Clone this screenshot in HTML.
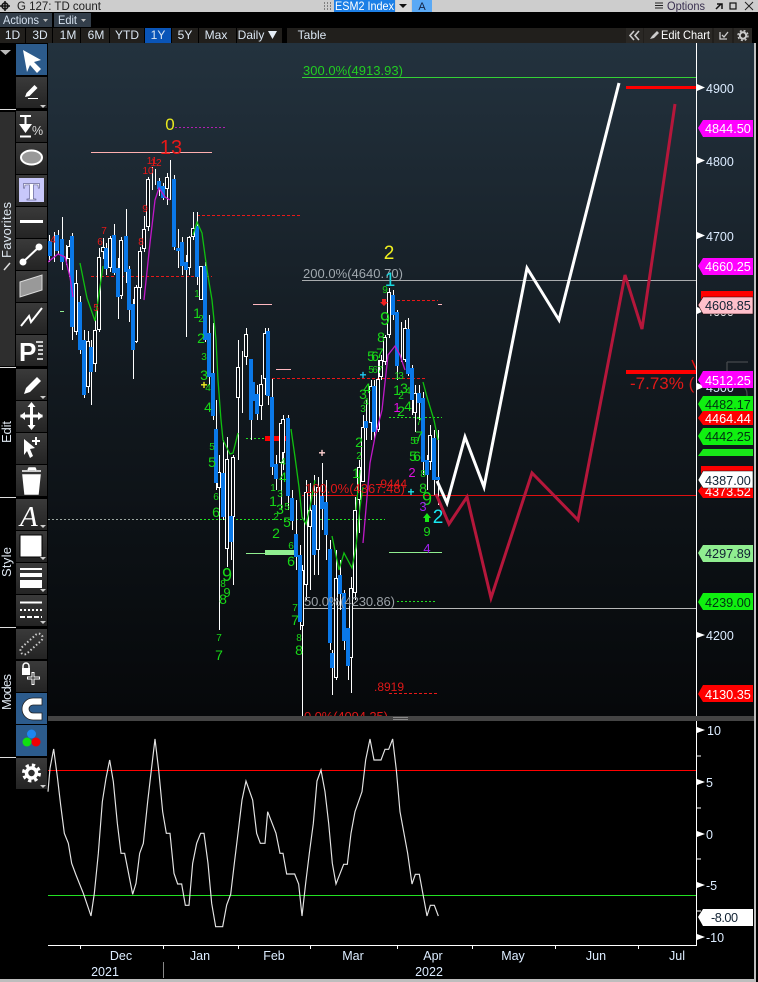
<!DOCTYPE html>
<html><head><meta charset="utf-8"><style>
html,body{margin:0;padding:0;background:#000;width:758px;height:982px;overflow:hidden}
svg{display:block;font-family:"Liberation Sans",sans-serif}
.w{fill:none;stroke:#fff;stroke-width:1}
</style></head><body>
<svg width="758" height="982" viewBox="0 0 758 982" xmlns="http://www.w3.org/2000/svg">
<defs><linearGradient id="bg" x1="0" y1="0" x2="0" y2="1"><stop offset="0" stop-color="#23323e"/><stop offset=".5" stop-color="#12191f"/><stop offset="1" stop-color="#06080a"/></linearGradient>
<clipPath id="cl"><rect x="48" y="43" width="649" height="673"/></clipPath>
<linearGradient id="bt" x1="0" y1="0" x2="0" y2="1"><stop offset="0" stop-color="#3a3a3a"/><stop offset="1" stop-color="#242424"/></linearGradient></defs>
<rect width="758" height="982" fill="#000"/>
<!-- title bar -->
<rect width="758" height="12" fill="#cdcdcd"/>
<g fill="none" stroke="#111" stroke-width="1.5"><circle cx="5" cy="6" r="3"/><path d="M5 1V11M0 6H10"/></g>
<text x="17" y="10" font-size="12" fill="#222" textLength="84" lengthAdjust="spacingAndGlyphs">G 127: TD count</text>
<path d="M324 3h1M327 3h1M330 3h1M324 6h1M327 6h1M330 6h1M324 9h1M327 9h1M330 9h1" stroke="#333"/>
<rect x="334" y="0" width="61" height="12" fill="#1c7fe6"/>
<text x="335" y="10" font-size="12" fill="#fff" textLength="59" lengthAdjust="spacingAndGlyphs">ESM2 Index</text>
<rect x="396" y="0" width="15" height="12" fill="#d8d8d8"/><path d="M399 4h8l-4 4z" fill="#111"/>
<rect x="412" y="0" width="20" height="12" fill="#5aa9f5"/><text x="422" y="10" font-size="11" text-anchor="middle" fill="#124">A</text>
<path d="M655 3h8M655 5.500h8M655 8h8" stroke="#222" stroke-width="1"/>
<text x="667" y="10" font-size="12" fill="#3a3050" textLength="38" lengthAdjust="spacingAndGlyphs">Options</text>
<path d="M716 9l5-5M717 4h5v5" stroke="#111" fill="none" stroke-width="1.500"/>
<rect x="730" y="3" width="6" height="6" fill="none" stroke="#111" stroke-width="1.200"/>
<path d="M745 2l8 8M753 2l-8 8" stroke="#222"/>
<!-- actions -->
<rect x="0" y="13" width="52" height="14" fill="#333e4a"/><rect x="54" y="13" width="37" height="14" fill="#333e4a"/>
<text x="3" y="24" font-size="12" fill="#d6e2f0" textLength="36" lengthAdjust="spacingAndGlyphs">Actions</text><path d="M43 19h5l-2.500 3z" fill="#bbb"/>
<text x="58" y="24" font-size="12" fill="#d6e2f0" textLength="19" lengthAdjust="spacingAndGlyphs">Edit</text><path d="M81 19h5l-2.500 3z" fill="#bbb"/>
<!-- range row -->
<rect x="0" y="27" width="758" height="16" fill="#000"/>
<g fill="#211f1c"><rect x="0" y="28" width="25" height="15"/><rect x="26" y="28" width="26" height="15"/><rect x="53" y="28" width="27" height="15"/><rect x="81" y="28" width="28" height="15"/><rect x="110" y="28" width="34" height="15"/><rect x="172" y="28" width="26" height="15"/><rect x="199" y="28" width="37" height="15"/><rect x="237" y="28" width="45" height="15"/><rect x="287" y="28" width="465" height="15"/></g>
<rect x="145" y="28" width="26" height="15" fill="#0a55b8"/>
<g fill="#dbe6f2" font-size="12" text-anchor="middle"><text x="12.500" y="39">1D</text><text x="40" y="39">3D</text><text x="68" y="39">1M</text><text x="96" y="39">6M</text><text x="127" y="39">YTD</text><text x="158" y="39">1Y</text><text x="185" y="39">5Y</text><text x="216" y="39">Max</text><text x="251" y="39">Daily</text><text x="312" y="39">Table</text></g>
<path d="M268 31h9l-4.500 8z" fill="#e6eef6"/>
<rect x="626" y="28" width="17" height="15" fill="#2a2825"/><rect x="644" y="28" width="68" height="15" fill="#2a2825"/><rect x="714" y="28" width="18" height="15" fill="#2a2825"/><rect x="734" y="28" width="18" height="15" fill="#2a2825"/>
<path d="M634 31l-4 4.500 4 4.500M639 31l-4 4.500 4 4.500" fill="none" stroke="#ccc" stroke-width="1.600"/>
<path d="M650 39l2-3 5-5 2 2-5 5z" fill="#ccc"/>
<text x="661" y="39" font-size="12" fill="#fff" textLength="49" lengthAdjust="spacingAndGlyphs">Edit Chart</text>
<path d="M720 32v7h7M722 35l2 2 4-5" fill="none" stroke="#ccc" stroke-width="1.300"/>
<circle cx="743" cy="35.500" r="3.200" fill="none" stroke="#ccc" stroke-width="2"/><circle cx="743" cy="35.500" r="5" fill="none" stroke="#ccc" stroke-width="1.400" stroke-dasharray="2 2"/>
<!-- chart bg -->
<rect x="48" y="43" width="706" height="673" fill="url(#bg)"/>
<rect x="48" y="716" width="706" height="5" fill="#444"/><path d="M393 717.500h15M393 719.500h15" stroke="#888"/>
<rect x="48" y="721" width="706" height="258" fill="#000"/>
<g clip-path="url(#cl)">
<!-- horizontals -->
<path d="M302 77.500H696" stroke="#35d035"/>
<path d="M302 280.500H696" stroke="#a9acae"/>
<path d="M302 608.500H696" stroke="#b8b8b8"/>
<path d="M302 495.500H696" stroke="#e01010"/>
<path d="M91 152.500H212" stroke="#ffb0b0"/>
<path d="M175 127.500H227" stroke="#b020b0" stroke-dasharray="2 2"/>
<g stroke="#e81818" fill="none" stroke-dasharray="3 2"><path d="M197 215.500H300M91 276.500H212M272 378.500H426M397 300.500H438M389 693.500H438"/></g>
<path d="M48 519.500H200" stroke="#9aa6a0" fill="none" stroke-dasharray="2 2"/>
<g stroke="#22e022" fill="none" stroke-dasharray="2 2"><path d="M246 438.500H265M389 417.500H442M397 601.500H437M200 519.500H385"/></g>
<path d="M389 552.500H442M246 553.500H265M64 311.500H60" stroke="#90ee90"/>
<path d="M253 304.500H272M276 369.500H291M438 304.500H442" stroke="#ffb8c0"/>
<rect x="265" y="436" width="22" height="5" fill="#f00"/><rect x="265" y="550" width="30" height="5" fill="#90ee90"/>
<!-- wicks -->
<path class="w" d="M49.500 235V262M54.500 232V262M58.500 230V254M62.500 217V270M66.500 245V265M69.500 240V277M72.500 233V340M76.500 270V335M80.500 296V354M84.500 330V398M88.500 331V393M91.500 340V405M95.500 320V372M99.500 248V332M103.500 238V259M106.500 243V275M110.500 236V272M114.500 224V275M118.500 258V319M121.500 237V299M126.500 209V283M129.500 266V322M133.500 299V379M136.500 285V343M140.500 247V299M144.500 216V252M148.500 177V231M152.500 167V190M155.500 169V185M159.500 178V196M163.500 183V200M167.500 173V205M170.500 160V200M174.500 175V250M178.500 229V268M182.500 237V275M186.500 255V337M189.500 236V275M193.500 212V240M197.500 212V285M201.500 266V300M205.500 262V342M209.500 315V385M213.500 323V420M216.500 400V490M219.500 455V630M223.500 440V520M227.500 437V567M231.500 510V560M233.500 455V585M238.500 340V460M242.500 351V413M246.500 328V365M251.500 359V440M257.500 385V420M261.500 375V420M265.500 328V395M268.500 328V405M272.500 379V475M276.500 455V490M281.500 420V510M283.500 415V470M288.500 415V510M292.500 490V530M296.500 500V570M300.500 545V630M302.500 565V716M306.500 480V600M310.500 483V590M314.500 475V575M318.500 477V575M322.500 463V530M326.500 480V560M330.500 540V650M332.500 650V695M336.500 550V680M340.500 560V610M344.500 590V650M348.500 640V680M351.500 577V693M355.500 497V600M359.500 460V533M363.500 415V482M366.500 400V440M371.500 380V440M374.500 380V440M378.500 360V432M381.500 355V380M385.500 335V365M389.500 288V338M393.500 290V320M397.500 310V380M401.500 322V362M405.500 320V362M408.500 318V376M412.500 365V415M415.500 385V432M419.500 385V420M423.500 392V475M427.500 455V490M430.500 425V470M434.500 430V495M438.500 430V505"/>
<!-- hollow candles -->
<g fill="none" shape-rendering="crispEdges">
<path stroke="#fff" stroke-width="4" d="M69 246V259M76 283V332M88 341V387M95 330V364M99 257V330M103 247V252M110 238V268M121 240V296M136 287V342M140 251V288M144 229V249M148 179V227M167 177V189M189 237V268M193 228V237M201 266V300M219 472V488M227 459V549M233 457V517M238 367V398M246 334V357M261 384V406M265 333V379M281 423V463M283 419V453M302 570V626M306 492V585M310 510V527M318 487V550M336 578V678M351 588V658M355 510V593M359 467V500M363 427V482M371 386V423M378 379V430M381 360V377M385 337V362M389 292V335M405 328V360M415 393V413M430 435V462"/>
<path stroke="#0a1015" stroke-width="2" d="M69 247V258M76 284V331M88 342V386M95 331V363M99 258V329M103 248V251M110 239V267M121 241V295M136 288V341M140 252V287M144 230V248M148 180V226M167 178V188M189 238V267M193 229V236M201 267V299M219 473V487M227 460V548M233 458V516M238 368V397M246 335V356M261 385V405M265 334V378M281 424V462M283 420V452M302 571V625M306 493V584M310 511V526M318 488V549M336 579V677M351 589V657M355 511V592M359 468V499M363 428V481M371 387V422M378 380V429M381 361V376M385 338V361M389 293V334M405 329V359M415 394V412M430 436V461"/>
<path stroke="#0a78e8" stroke-width="4" d="M50 241V256M57 235V251M62 239V262M72 236V327M80 302V350M84 340V395M91 347V372M106 248V269M114 235V273M118 268V297M126 236V272M129 269V310M133 304V350M159 181V189M163 186V198M174 179V247M178 248V251M182 242V266M186 262V270M197 226V277M205 266V340M209 333V377M213 373V416M216 429V483M223 473V517M231 516V542M251 359V420M253 382V401M257 394V414M268 331V396M272 397V467M276 464V479M288 418V496M292 498V521M296 534V557M300 555V622M314 505V555M322 496V509M326 502V535M330 549V643M332 653V668M340 575V594M344 593V641M348 628V666M366 421V428M374 386V432M393 295V315M397 312V366M408 329V374M412 368V400M419 393V403M423 398V462M427 460V475M434 438V480M438 477V480"/>
</g>
<!-- MAs -->
<g fill="none" stroke="#10c010" stroke-width="1.300">
<path d="M80 263L87 298 95 321 100 287 103 266"/>
<path d="M193 235L197 222 202 233 207 270 212 300 216 340 218 380 221 420 223 440 230 454 233 453 238 433"/>
<path d="M291 429L295 457 299 487 302 517 306 524 310 507 315 480"/>
<path d="M332 536L339 570 344 553 352 568 356 547 360 507 363 487M356 510L360 470"/>
<path d="M423 382L427 397 434 420 438 440"/>
</g>
<g fill="none" stroke="#c018c8" stroke-width="1.300">
<path d="M48 262L58 254 65 257 70 277 73 297"/>
<path d="M144 300L150 243 155 200 159 188 165 197 170 200"/>
<path d="M363 543L370 463 375 437 382 410 388 355 395 346 400 355 405 370"/>
</g>
<!-- forecasts -->
<path d="M437 481L447 503 465 437 484 487 527 268 559 320 619 83" fill="none" stroke="#fff" stroke-width="3"/>
<path d="M436 494L449 524 467 497 491 598 532 473 578 520 625 275 642 329 675 104" fill="none" stroke="#b5173b" stroke-width="3"/>
<rect x="626" y="86" width="70" height="3" fill="#f00"/>
<rect x="626" y="370" width="70" height="4" fill="#f00"/>
<path d="M692 360l5 11 4-11" fill="none" stroke="#e01010" stroke-width="1.500"/>
<text x="630" y="389" font-size="17" fill="#e21818">-7.73% (</text>
<!-- fib labels -->
<text x="303" y="75" font-size="13" fill="#22cc22" textLength="100">300.0%(4913.93)</text>
<text x="303" y="278" font-size="13" fill="#a0a8ae" textLength="100">200.0%(4640.70)</text>
<text x="305" y="493" font-size="13" fill="#e01818" textLength="100">100.0%(4367.48)</text>
<text x="304" y="606" font-size="13" fill="#9aa0a6" textLength="91">50.0%(4230.86)</text>
<text x="304" y="721" font-size="13" fill="#e01818" textLength="84">0.0%(4094.25)</text>
<text x="377" y="488" font-size="12" fill="#e01818">.9444</text>
<text x="374" y="691" font-size="12" fill="#e01818">.8919</text>
<text x="170" y="130" font-size="17" fill="#e8e820" text-anchor="middle">0</text>
<text x="171" y="154" font-size="20" fill="#e81818" text-anchor="middle">13</text>
<text x="389" y="259" font-size="19" fill="#f0f020" text-anchor="middle">2</text>
<text x="390" y="286" font-size="19" fill="#18d8e0" text-anchor="middle">1</text>
<text x="438" y="523" font-size="19" fill="#18e8f0" text-anchor="middle">2</text>
<g fill="#e81818" font-size="10" text-anchor="middle"><text x="53" y="243">4</text><text x="104" y="234">7</text><text x="100" y="245">6</text><text x="96" y="311">5</text><text x="141" y="245">8</text><text x="145" y="212">9</text><text x="148" y="174">10</text><text x="152" y="164">11</text><text x="156" y="166">12</text></g>
<g fill="#18d818" font-size="10" text-anchor="middle">
<text x="197" y="297">1</text><text x="201" y="322">2</text><text x="204" y="360">3</text><text x="208" y="391">4</text><text x="212" y="450">5</text><text x="216" y="500">6</text><text x="223" y="587">8</text><text x="219" y="641">7</text><text x="273" y="491">1</text><text x="280" y="497">3</text><text x="276" y="520">2</text><text x="283" y="465">4</text><text x="287" y="510">5</text><text x="291" y="549">6</text><text x="295" y="611">7</text><text x="299" y="641">8</text><text x="363" y="412">3</text><text x="366" y="405">4</text><text x="359" y="459">2</text><text x="385" y="293">9</text><text x="371" y="373">5</text><text x="375" y="373">6</text><text x="380" y="373">7</text><text x="397" y="379">1</text><text x="401" y="379">3</text><text x="401" y="399">2</text><text x="408" y="394">4</text><text x="419" y="425">7</text><text x="413" y="444">5</text><text x="416" y="444">6</text><text x="423" y="477">8</text>
</g>
<g fill="#18d818" font-size="14" text-anchor="middle">
<text x="197" y="318">1</text><text x="201" y="343">2</text><text x="204" y="380">3</text><text x="208" y="412">4</text><text x="212" y="467">5</text><text x="216" y="517">6</text><text x="223" y="604">8</text><text x="219" y="660">7</text><text x="273" y="506">1</text><text x="280" y="514">3</text><text x="276" y="538">2</text><text x="283" y="482">4</text><text x="287" y="527">5</text><text x="291" y="566">6</text><text x="295" y="625">7</text><text x="299" y="655">8</text><text x="363" y="399">3</text><text x="367" y="393">4</text><text x="359" y="447">2</text><text x="356" y="478">1</text><text x="381" y="342">8</text><text x="371" y="361">5</text><text x="375" y="361">6</text><text x="380" y="358">7</text><text x="397" y="395">1</text><text x="404" y="393">3</text><text x="408" y="411">4</text><text x="401" y="416">2</text><text x="419" y="441">7</text><text x="413" y="461">5</text><text x="417" y="461">6</text><text x="423" y="493">8</text><text x="427" y="536" font-size="13">9</text>
</g>
<g fill="#18d818" font-size="18" text-anchor="middle"><text x="227" y="581">9</text><text x="385" y="325">9</text><text x="427" y="505">9</text></g>
<text x="227" y="597" fill="#18d818" font-size="13" text-anchor="middle">9</text>
<g font-size="13" fill="#e010e0" text-anchor="middle"><text x="397" y="412">1</text><text x="412" y="477">2</text></g>
<g font-size="13" fill="#a020f0" text-anchor="middle"><text x="423" y="511">3</text><text x="427" y="553">4</text></g>
<g font-size="12" font-weight="bold" text-anchor="middle"><text x="363" y="379" fill="#20c8f0">+</text><text x="411" y="496" fill="#20e0e8">+</text><text x="204" y="389" fill="#f0f020">+</text><text x="322" y="457" fill="#ffd0d0">+</text></g>
<path d="M427 513l4 5h-2v4h-4v-4h-2z" fill="#18e818"/>
<path d="M384 306l-4-4h2v-3h4v3h2z" fill="#f02020"/>
</g>
<!-- frames -->
<path d="M696.500 43V716M696.500 721V945.500H48" stroke="#fff" fill="none"/>
<rect x="754" y="43" width="2" height="938" fill="#bdbdbd"/>
<rect x="0" y="979" width="756" height="3" fill="#bdbdbd"/>
<path d="M727 362h21M727 362v22M727 384c14 0 20 2 20 10v6h-20" fill="none" stroke="#45494c" stroke-width="1.300"/>
<!-- price axis -->
<g fill="#fff"><path d="M697 84l8 3.500-8 3.500zM697 157l8 3.500-8 3.500zM697 232l8 3.500-8 3.500zM697 307l8 3.500-8 3.500zM697 383l8 3.500-8 3.500zM697 632l8 3-8 3zM697 727l8 3-8 3zM697 779l8 3-8 3zM697 831l8 3-8 3zM697 882l8 3-8 3zM697 934l8 3-8 3z"/></g>
<g fill="#dcecff" font-size="12.500"><text x="706" y="93">4900</text><text x="706" y="166">4800</text><text x="706" y="241">4700</text><text x="706" y="316" fill="#eee">4600</text><text x="706" y="392">4500</text><text x="706" y="640">4200</text><text x="707" y="735">10</text><text x="706" y="787">5</text><text x="706" y="839">0</text><text x="706" y="890">-5</text><text x="706" y="942">-10</text></g>
<path d="M697 756h4M697 808h4M697 859h4M697 911h4" stroke="#fff"/>
<!-- tags -->
<g font-size="12.700">
<path d="M698 128l5-8h50v17h-50z" fill="#ff00ff"/><text x="705" y="133" fill="#fff">4844.50</text>
<path d="M698 266l5-8h50v17h-50z" fill="#ff00ff"/><text x="705" y="271" fill="#fff">4660.25</text>
<path d="M701 291h52v8h-52z" fill="#f00"/><path d="M698 305l5-8h50v17h-50z" fill="#ffc0cb" stroke="#200" stroke-width=".6"/><text x="705" y="310" fill="#123">4608.85</text>
<path d="M698 380l5-9h50v17h-50z" fill="#ff00ff"/><text x="705" y="385" fill="#fff">4512.25</text>
<path d="M698 456l5-7h50v7h-50z" fill="#18e818"/>
<path d="M698 404l5-8h50v17h-50z" fill="#10f010"/><text x="705" y="409" fill="#031">4482.17</text>
<path d="M698 418l5-7h50v14h-50z" fill="#f00"/><text x="705" y="423" fill="#fff">4464.44</text>
<path d="M698 436l5-8h50v17h-50z" fill="#10f010"/><text x="705" y="441" fill="#031">4442.25</text>
<path d="M701 466h52v9h-52z" fill="#f00"/>
<path d="M698 491l5-7h50v14h-50z" fill="#f00"/><text x="705" y="496" fill="#fff">4373.52</text>
<path d="M698 480l5-9h50v17h-50z" fill="#fff" stroke="#111" stroke-width=".6"/><text x="705" y="485" fill="#123">4387.00</text>
<path d="M698 553l5-8h50v17h-50z" fill="#90ee90"/><text x="705" y="558" fill="#123">4297.89</text>
<path d="M698 602l5-9h50v17h-50z" fill="#10f010"/><text x="705" y="607" fill="#031">4239.00</text>
<path d="M698 694l5-9h50v17h-50z" fill="#f00"/><text x="705" y="699" fill="#fff">4130.35</text>
<path d="M698 917l5-8h50v17h-50z" fill="#fff"/><text x="711" y="922" fill="#123" textLength="27">-8.00</text>
</g>
<!-- lower pane -->
<path d="M48 770.500H696" stroke="#f00"/><path d="M48 895.500H696" stroke="#22e022"/>
<g transform="translate(40 710) scale(.33333)"><polyline fill="none" stroke="#e4e4e4" stroke-width="3.500" points="24,245 30,175 41,117 52,200 62,285 73,370 85,400 95,460 108,495 130,550 153,618 163,550 175,430 187,275 198,205 209,150 220,215 232,340 243,430 254,430 278,553 288,520 299,430 310,400 323,275 334,180 345,87 356,180 368,305 379,370 390,370 402,490 413,522 425,522 436,586 447,586 458,460 470,400 482,370 492,370 504,460 515,580 527,650 548,650 560,585 572,553 583,460 594,370 606,270 618,213 638,270 650,370 661,400 675,400 683,305 708,370 720,430 729,430 740,492 764,492 776,522 786,618 797,520 808,430 820,340 831,213 843,180 855,245 866,340 877,460 888,522 911,463 922,463 933,370 945,305 966,245 977,150 990,87 1002,150 1023,150 1035,118 1046,118 1058,87 1069,180 1080,305 1103,430 1116,522 1126,493 1138,493 1149,553 1161,618 1171,586 1183,586 1195,618"/></g>
<!-- time axis -->
<path d="M80.500 946v3M163.500 946v3M238.500 946v3M310.500 946v3M397.500 946v3M472.500 946v3M555.500 946v3M638.500 946v3" stroke="#fff"/>
<path d="M163.500 962V978" stroke="#888"/>
<g fill="#dcecff" font-size="12.500" text-anchor="middle"><text x="121" y="960">Dec</text><text x="200" y="960">Jan</text><text x="274" y="960">Feb</text><text x="353" y="960">Mar</text><text x="433" y="960">Apr</text><text x="513" y="960">May</text><text x="596" y="960">Jun</text><text x="677" y="960">Jul</text><text x="105" y="976">2021</text><text x="429" y="976">2022</text></g>
<!-- left panel -->
<path d="M0 50h11l-5.500 5z" fill="#bbb"/>
<rect x="0" y="112" width="15" height="254" fill="#2e2e2e"/>
<path d="M0 109.500H16M0 367.500H16M0 497.500H16M0 627.500H16M0 757.500H16" stroke="#ddd"/>
<g fill="#dfe8f2" font-size="13"><text transform="translate(11 258) rotate(-90)" textLength="56">Favorites</text><text transform="translate(11 443) rotate(-90)" textLength="22">Edit</text><text transform="translate(11 577) rotate(-90)" textLength="30">Style</text><text transform="translate(11 710) rotate(-90)" textLength="36">Modes</text></g>
<path d="M4 270l6-7" stroke="#ddd" stroke-width="1.500"/>
<g fill="url(#bt)">
<rect x="16" y="77" width="31" height="31"/><rect x="16" y="111" width="31" height="31"/><rect x="16" y="143" width="31" height="31"/><rect x="16" y="175" width="31" height="31"/><rect x="16" y="207" width="31" height="31"/><rect x="16" y="239" width="31" height="31"/><rect x="16" y="271" width="31" height="31"/><rect x="16" y="303" width="31" height="31"/><rect x="16" y="335" width="31" height="31"/><rect x="16" y="369" width="31" height="31"/><rect x="16" y="401" width="31" height="31"/><rect x="16" y="433" width="31" height="31"/><rect x="16" y="465" width="31" height="31"/><rect x="16" y="499" width="31" height="31"/><rect x="16" y="531" width="31" height="31"/><rect x="16" y="563" width="31" height="31"/><rect x="16" y="595" width="31" height="31"/><rect x="16" y="629" width="31" height="30"/><rect x="16" y="661" width="31" height="31"/><rect x="16" y="758" width="31" height="31"/>
</g>
<g fill="#2c5b8c"><rect x="16" y="44" width="31" height="31"/><rect x="16" y="693" width="31" height="31"/><rect x="16" y="725" width="31" height="31"/></g>
<!-- icons -->
<path d="M23 50l18 10-7 2 7 7-4 4-7-8-3 7z" fill="#fff"/>
<path d="M25 97l1.500-4 8-8 3 3-8 8z" fill="#fff"/><path d="M28 98.500h10" stroke="#fff"/><path d="M40 105h6l-3 3z" fill="#ccc"/>
<path d="M20 116h11M25.500 116v8M20 136.500h11" fill="none" stroke="#fff" stroke-width="2"/><path d="M19 124h13l-6.500 9z" fill="#fff"/><text x="32" y="135" font-size="12.500" fill="#ddd">%</text>
<ellipse cx="31.500" cy="157.500" rx="10.500" ry="7" fill="#999" stroke="#fff" stroke-width="2"/>
<rect x="19" y="178" width="25" height="24" fill="#c8c8fa"/><text x="31.500" y="200" font-size="25" font-family="Liberation Serif,serif" font-weight="bold" fill="#fff" stroke="#6a6a9a" stroke-width=".7" text-anchor="middle">T</text>
<rect x="20" y="220" width="23" height="3" fill="#fff"/>
<path d="M23 262L39 247" stroke="#fff" stroke-width="2"/><circle cx="23" cy="262" r="3.500" fill="#fff"/><circle cx="39" cy="247" r="3.500" fill="#fff"/>
<path d="M20 282l22-7v15l-22 7z" fill="#999" stroke="#ddd"/>
<path d="M21 326l8-10 2 6 11-14" fill="none" stroke="#fff" stroke-width="2"/>
<text x="19" y="361" font-size="26" font-weight="bold" fill="#fff">P</text><path d="M36 342h7M38 346h5M38 350h5M38 354h5M37 359h6" stroke="#fff" stroke-width="1.500"/>
<path d="M24 394l2-6 11-11 4 4-11 11z" fill="#fff"/><path d="M40 396h6l-3 3z" fill="#ccc"/>
<path d="M31.500 405v22M20.500 416h22" stroke="#fff" stroke-width="3"/><path d="M31.500 402l4 5h-8zM31.500 430l4-5h-8zM20 416l5-4v8zM43 416l-5-4v8z" fill="#fff"/>
<path d="M24 439l11 9-5 1 3 7-3 2-3-7-3 4z" fill="#fff"/><path d="M36 437v8M32 441h8" stroke="#fff" stroke-width="2"/>
<path d="M23 475h17l-2 19H25zM22 471h19M28 470l1-2h6l1 2" fill="#fff" stroke="#fff" stroke-width="1.500"/>
<text x="20" y="526" font-size="29" font-family="Liberation Serif,serif" font-style="italic" fill="#fff">A</text><path d="M40 525h6l-3 3z" fill="#ccc"/>
<rect x="20" y="535" width="22" height="22" fill="#fff" stroke="#000" stroke-width="1"/><path d="M40 557h6l-3 3z" fill="#ccc"/>
<path d="M20 568h22v2H20zM20 573h22v4H20zM20 580h22v8H20z" fill="#fff"/><path d="M40 589h6l-3 3z" fill="#ccc"/>
<path d="M20 602.500h22" stroke="#fff" stroke-width="2"/><path d="M20 610h22" stroke="#fff" stroke-width="2" stroke-dasharray="2 2"/><path d="M20 617h22" stroke="#fff" stroke-width="2" stroke-dasharray="5 2"/><path d="M40 621h6l-3 3z" fill="#ccc"/>
<rect x="18" y="640" width="27" height="8" rx="4" transform="rotate(-42 31.500 644)" fill="none" stroke="#ccc" stroke-width="2" stroke-dasharray="1.500 2.200"/>
<rect x="22" y="668" width="8" height="7" fill="#fff"/><path d="M23 668v-2a3 3 0 0 1 6 0v2" fill="none" stroke="#fff" stroke-width="1.500"/><path d="M33 672v13M27 678h13" stroke="#fff" stroke-width="3"/><path d="M33 673v11M28 678h11" stroke="#222" stroke-width="1"/>
<path d="M42 698H33a11 11 0 0 0 0 22h9v-7h-9a4 4 0 0 1 0-8h9z" fill="#fff" stroke="#222" stroke-width=".8"/>
<circle cx="31.500" cy="734" r="4.500" fill="#1c86f0"/><circle cx="27" cy="742" r="4.500" fill="#10e010"/><circle cx="36" cy="742" r="4.500" fill="#f00000"/>
<circle cx="31.500" cy="773" r="5" fill="none" stroke="#fff" stroke-width="3.500"/><circle cx="31.500" cy="773" r="8" fill="none" stroke="#fff" stroke-width="3" stroke-dasharray="3.300 3"/><path d="M40 785h6l-3 3z" fill="#ccc"/>
</svg>
</body></html>
